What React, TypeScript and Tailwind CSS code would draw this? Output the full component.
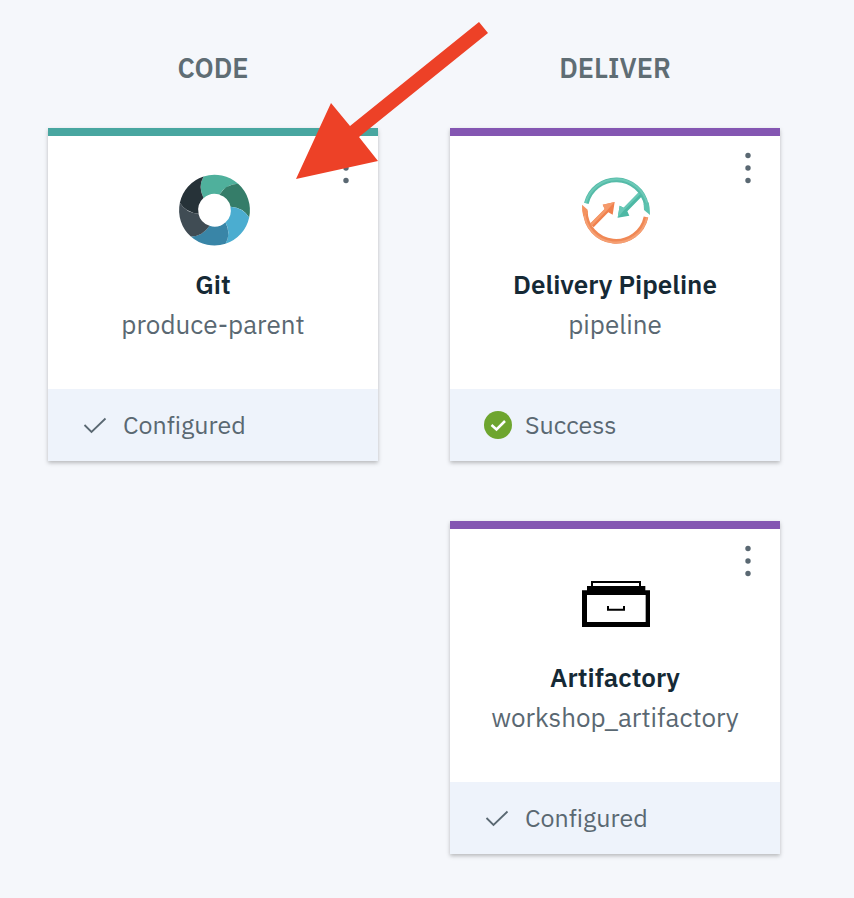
import type { ReactNode } from "react";

const ringColors = ["#4fb09c", "#357d69", "#4badd0", "#3985a7", "#404c54", "#263238"];

function GitIcon() {
  return (
    <svg className="size-[72px] overflow-visible" viewBox="21 27 216 216" aria-hidden="true">
      <g transform="translate(133.5 135.5)">
        {ringColors.map((color, i) => (
          <path
            key={color}
            transform={`rotate(${i * 60})`}
            d="M-33-101A106 106 0 0 1 71-79Q36-79 15-47A49 49 0 0 0-33-36Q-50-71-33-101Z"
            fill={color}
          />
        ))}
      </g>
    </svg>
  );
}

function PipelineIcon() {
  return (
    <svg className="size-[72px]" viewBox="27 27 216 216" fill="none" aria-hidden="true">
      <path d="M49 115A92 92 0 0 1 229 120" stroke="#55bba8" strokeWidth="14" />
      <path d="M47 114A95 95 0 0 1 232 119" stroke="#6cc9b7" strokeWidth="6" />
      <path d="M221 117L236 112Q240 128 240 150L222 135Z" fill="#5cc2af" />
      <path d="M205 83L216 94L172 139L178 152L143 158L149 122L161 128Z" fill="#4db8a4" />
      <path d="M205 83L210 88L160 138L143 158L149 122L161 128Z" fill="#68c8b6" />
      <path d="M46 138A92 92 0 0 0 228 156" stroke="#f08855" strokeWidth="14" />
      <path d="M43 138A95 95 0 0 0 231 157" stroke="#f5a074" strokeWidth="6" />
      <path d="M36 119L53 134L53 146L40 154Q35 138 36 119Z" fill="#f4925f" />
      <path d="M60 176L104 132L98 119L134 111L128 149L115 142L71 187Z" fill="#f0804d" />
      <path d="M60 176L104 132L98 119L134 111L110 137L66 182Z" fill="#f59a6b" />
    </svg>
  );
}

function ArtifactoryIcon() {
  return (
    <svg className="size-[72px]" viewBox="27 6 216 216" aria-hidden="true">
      <path d="M66 65V51H210V65" fill="none" stroke="#000" strokeWidth="6" />
      <path fillRule="evenodd" d="M51 63H226V76H240V186H36V76H51ZM51 90V171H227V90Z" fill="#000" />
      <path d="M114 123V134H162V123" fill="none" stroke="#000" strokeWidth="6" />
    </svg>
  );
}

function ConfiguredMark() {
  return (
    <svg className="size-7 shrink-0" viewBox="0 0 28 28" fill="none" aria-hidden="true">
      <path d="M2.500 14L9.500 21L23.500 7.500" stroke="#5a6872" strokeWidth="1.800" />
    </svg>
  );
}

function SuccessMark() {
  return (
    <svg className="size-7 shrink-0" viewBox="0 0 28 28" fill="none" aria-hidden="true">
      <circle cx="14" cy="14" r="14" fill="#6ea52f" />
      <path d="M7.500 14L12.500 18.500L21 10" stroke="#fff" strokeWidth="2.500" />
    </svg>
  );
}

type CardProps = {
  accent: string;
  icon: ReactNode;
  name: string;
  detail: string;
  mark: ReactNode;
  status: string;
};

function ToolCard({ accent, icon, name, detail, mark, status }: CardProps) {
  return (
    <article className={`relative border-t-8 bg-white shadow-[0_2px_4px_rgba(0,0,0,0.25)] ${accent}`}>
      <button
        type="button"
        aria-label={`${name} options`}
        className="absolute top-3 right-4 flex h-10 w-8 items-center justify-center"
      >
        <svg className="h-8 w-2" viewBox="0 0 8 32" fill="#5a6872" aria-hidden="true">
          <circle cx="4" cy="3.500" r="2.700" />
          <circle cx="4" cy="16" r="2.700" />
          <circle cx="4" cy="28.500" r="2.700" />
        </svg>
      </button>
      <div className="flex min-h-[253px] flex-col items-center pt-[38px]">
        {icon}
        <h3 className="mt-[18px] text-[26px] leading-10 font-semibold text-[#152935]">{name}</h3>
        <p className="text-[26px] leading-10 text-[#5a6872]">{detail}</p>
      </div>
      <footer className="flex h-[72px] items-center gap-[13px] bg-[#eef3fb] pl-[34px] text-[25px] text-[#5a6872]">
        {mark}
        <span>{status}</span>
      </footer>
    </article>
  );
}

function Column({ title, children }: { title: string; children: ReactNode }) {
  return (
    <section>
      <h2 className="mb-10 text-center text-[27px] leading-10 font-semibold text-[#5f6d74]">{title}</h2>
      <div className="flex flex-col gap-[60px]">{children}</div>
    </section>
  );
}

export default function App() {
  return (
    <main className="relative min-h-screen bg-[#f5f7fb] pt-12 pr-[74px] pb-11 pl-12 font-['IBM_Plex_Sans','Open_Sans',sans-serif] [font-variant-ligatures:none]">
      <div className="grid grid-cols-2 items-start gap-[72px]">
        <Column title="CODE">
          <ToolCard
            accent="border-[#48a6a0]"
            icon={<GitIcon />}
            name="Git"
            detail="produce-parent"
            mark={<ConfiguredMark />}
            status="Configured"
          />
        </Column>
        <Column title="DELIVER">
          <ToolCard
            accent="border-[#8456b2]"
            icon={<PipelineIcon />}
            name="Delivery Pipeline"
            detail="pipeline"
            mark={<SuccessMark />}
            status="Success"
          />
          <ToolCard
            accent="border-[#8456b2]"
            icon={<ArtifactoryIcon />}
            name="Artifactory"
            detail="workshop_artifactory"
            mark={<ConfiguredMark />}
            status="Configured"
          />
        </Column>
      </div>
      <svg
        className="pointer-events-none absolute top-5 left-[296px] h-40 w-48"
        viewBox="0 0 192 160"
        aria-hidden="true"
      >
        <path d="M0 159L35 83L54 106L183 2L192 13L63 117L82 141Z" fill="#ed4127" />
      </svg>
    </main>
  );
}
